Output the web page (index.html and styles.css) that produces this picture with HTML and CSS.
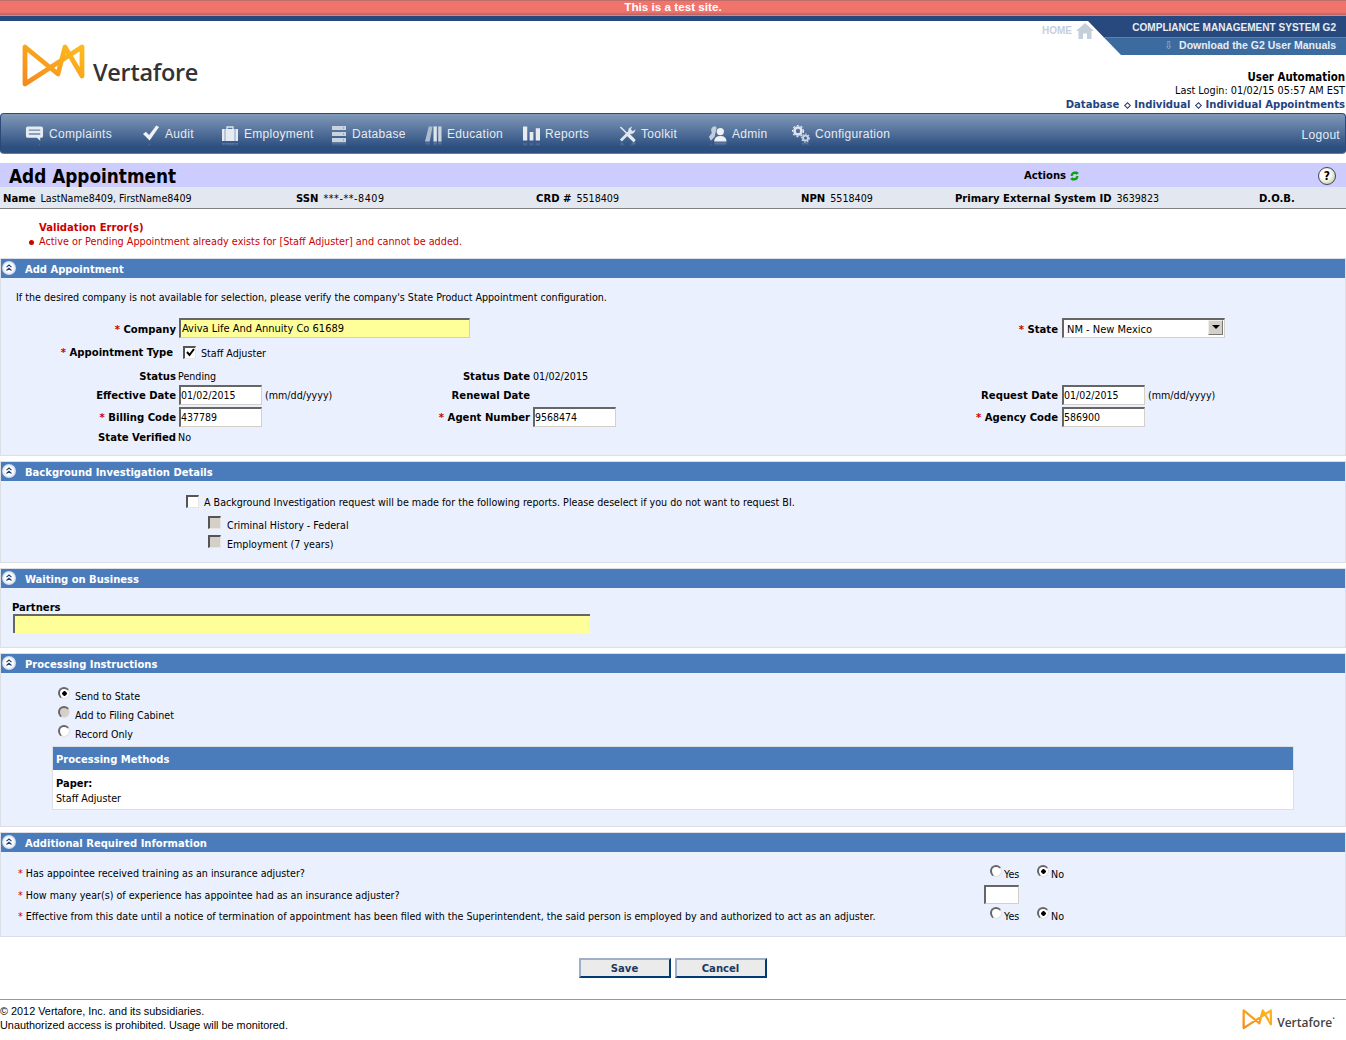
FILE: index.html
```html
<!DOCTYPE html>
<html lang="en">

<head>
    <meta charset="UTF-8">
    <title>Add Appointment</title>
    <link rel="stylesheet" href="styles.css">
</head>

<body>
    <svg class="defs" width="0" height="0">
        <defs>
            <linearGradient id="logo-grad" x1="0" y1="1" x2="1" y2="0">
                <stop offset="0" stop-color="#f58a1f" />
                <stop offset="1" stop-color="#fdbb1c" />
            </linearGradient>
            <symbol id="logo-mark" viewBox="0 0 64 44">
                <path d="M3 3 V40 L60 3 V32 L43 3 L36 30 Z" fill="none" stroke="url(#logo-grad)" stroke-width="4.800" stroke-linejoin="round" />
            </symbol>
            <symbol id="collapse" viewBox="0 0 14 14">
                <path d="M4.500 6.200 L7 4 L9.500 6.200 M4.500 9.500 L7 7.300 L9.500 9.500" fill="none" stroke="#1d3f78" stroke-width="1.100" />
            </symbol>
        </defs>
    </svg>

    <div class="test-bar">This is a test site.</div>

    <!-- logo, home corner and user block -->
    <div class="header">
        <div class="logo">
            <svg class="logo-mark" width="64" height="44"><use href="#logo-mark" /></svg>
            <span class="logo-text">Vertafore</span>
        </div>
        <div class="header-right">
            <div class="corner">
                <a class="home">HOME
                    <svg width="18" height="16" viewBox="0 0 18 16"><path d="M9 0 L18 8 H15.500 V16 H11 V10.500 H7 V16 H2.500 V8 H0 Z" fill="#c5cfdc" /></svg>
                </a>
                <div class="banner">
                    <div class="banner-top">COMPLIANCE MANAGEMENT SYSTEM G2</div>
                    <div class="banner-bottom"><span class="down">&#8681;</span>Download the G2 User Manuals</div>
                </div>
            </div>
            <div class="user">User Automation</div>
            <div class="login">Last Login: 01/02/15 05:57 AM EST</div>
            <div class="crumbs">Database <span class="dia"></span> Individual <span class="dia"></span> Individual Appointments</div>
        </div>
    </div>

    <div class="nav">
        <a class="nav-item">
            <svg class="nav-icon" width="19" height="18" viewBox="0 0 20 18"><path d="M3 1 H17 Q19 1 19 3 V11 Q19 13 17 13 H16 L16 16 L12.500 13 H3 Q1 13 1 11 V3 Q1 1 3 1 Z" fill="#e6ebf2" /><path d="M4 5 H16 M4 9 H16" stroke="#6d87ab" stroke-width="1.400" /></svg>
            Complaints
        </a>
        <a class="nav-item">
            <svg class="nav-icon" width="17" height="18" viewBox="0 0 18 18"><path d="M0 9 L3 6.500 L6.500 10 L14 0 L17 1.500 L7 16 Z" fill="#eef1f6" /></svg>
            Audit
        </a>
        <a class="nav-item">
            <svg class="nav-icon" width="18" height="18" viewBox="0 0 18 18"><path d="M6 4 V2 H12 V4" fill="none" stroke="#dfe5ee" stroke-width="1.300" /><path d="M1 4 H17 V16 H1 Z" fill="#e6ebf2" /><path d="M4 4 V16 M14 4 V16" stroke="#8ba0bc" /></svg>
            Employment
        </a>
        <a class="nav-item">
            <svg class="nav-icon" width="15" height="18" viewBox="0 0 15 18"><path d="M0 1 H14 V5 H0 Z M0 7 H14 V11 H0 Z M0 13 H14 V17 H0 Z" fill="#c9d2df" /><path d="M11 3 H12 M11 9 H12 M11 15 H12" stroke="#66809f" /></svg>
            Database
        </a>
        <a class="nav-item">
            <svg class="nav-icon" width="17" height="18" viewBox="0 0 18 18"><path d="M4 1 H8 L5 17 H0 Z" fill="#aebcd0" /><path d="M9 1 H12.500 V17 H9 Z" fill="#dfe5ee" /><path d="M14 1 H17.500 V17 H14 Z" fill="#cbd5e2" /></svg>
            Education
        </a>
        <a class="nav-item">
            <svg class="nav-icon" width="17" height="18" viewBox="0 0 18 18"><path d="M0 1 H4.500 V16 H0 Z M7 7 H11 V16 H7 Z M13.500 3 H18 V16 H13.500 Z" fill="#e6ebf2" /></svg>
            Reports
        </a>
        <a class="nav-item">
            <svg class="nav-icon" width="17" height="18" viewBox="0 0 18 18"><path d="M1.500 1.500 L9 9" stroke="#e6ebf2" stroke-width="1.600" /><path d="M9 9 L15.500 15.500" stroke="#e6ebf2" stroke-width="3.600" stroke-linecap="round" /><path d="M2 16 L11 7" stroke="#dfe5ee" stroke-width="3" /><path d="M10 8 Q8.500 2.500 14 1 L12.500 4 L14.500 6 L17.500 4 Q17 9.500 11 9 Z" fill="#dfe5ee" /></svg>
            Toolkit
        </a>
        <a class="nav-item">
            <svg class="nav-icon" width="19" height="18" viewBox="0 0 20 18"><path d="M3 16 L1 12 L4 8 Q2 2 6 1 Q9 0 9 3 L7 12 Z" fill="#c2cddc" /><circle cx="13" cy="6.500" r="3.800" fill="#eef1f6" /><path d="M6.500 17 Q6.500 11 13 11 Q19.500 11 19.500 17 Z" fill="#eef1f6" /></svg>
            Admin
        </a>
        <a class="nav-item">
            <svg class="nav-icon" width="18" height="18" viewBox="0 0 18 18"><circle cx="6" cy="6" r="3.500" fill="none" stroke="#dfe5ee" stroke-width="2.600" /><circle cx="6" cy="6" r="5.500" fill="none" stroke="#dfe5ee" stroke-width="1.300" stroke-dasharray="2 2" /><circle cx="13.500" cy="13" r="2.500" fill="none" stroke="#c9d3e0" stroke-width="2" /><circle cx="13.500" cy="13" r="4" fill="none" stroke="#c9d3e0" stroke-width="1.200" stroke-dasharray="1.500 1.500" /></svg>
            Configuration
        </a>
        <a class="nav-logout">Logout</a>
    </div>

    <div class="title-band">
        <h1>Add Appointment</h1>
        <div class="actions">Actions
            <svg width="9" height="10" viewBox="0 0 9 10"><path d="M0.500 5 Q1 0.500 5 0.500 L6.500 0.500 L6 0 L9 2 L6 4 L6.200 3 H4.500 Q3 3 2.700 5 Z M8.500 5 Q8 9.500 4 9.500 L2.500 9.500 L3 10 L0 8 L3 6 L2.800 7 H4.500 Q6 7 6.300 5 Z" fill="#0fa00f" /></svg>
        </div>
        <div class="help">?</div>
    </div>
    <div class="info-row">
        <div><b>Name</b>LastName8409, FirstName8409</div>
        <div><b>SSN</b><span class="ssn">***-**-8409</span></div>
        <div><b>CRD #</b>5518409</div>
        <div><b>NPN</b>5518409</div>
        <div><b>Primary External System ID</b>3639823</div>
        <div><b>D.O.B.</b></div>
    </div>

    <div class="errors">
        <div class="error-title">Validation Error(s)</div>
        <div class="error-item">Active or Pending Appointment already exists for [Staff Adjuster] and cannot be added.</div>
    </div>

    <div class="section">
        <div class="section-head"><svg class="toggle" width="14" height="14"><use href="#collapse" /></svg>Add Appointment</div>
        <div class="section-body body-appt">
            <p class="intro">If the desired company is not available for selection, please verify the company's State Product Appointment configuration.</p>
            <div class="form-grid">
                <label class="lbl lbl-low"><span class="req">*</span> Company</label>
                <div class="wide"><input class="field yellow company" type="text" value="Aviva Life And Annuity Co 61689"></div>
                <label class="lbl lbl-low"><span class="req">*</span> State</label>
                <div class="val val-right">
                    <div class="select">NM - New Mexico<span class="select-btn"></span></div>
                </div>

                <label class="lbl lbl-type"><span class="req">*</span> Appointment Type</label>
                <div class="wide type-val"><input class="box checked" type="checkbox" checked><span>Staff Adjuster</span></div>
                <div></div>
                <div></div>

                <label class="lbl pushed">Status</label>
                <div class="val pushed plain">Pending</div>
                <label class="lbl pushed">Status Date</label>
                <div class="val pushed">01/02/2015</div>
                <div></div>
                <div></div>

                <label class="lbl">Effective Date</label>
                <div class="val"><input class="field date" type="text" value="01/02/2015"><span class="hint">(mm/dd/yyyy)</span></div>
                <label class="lbl">Renewal Date</label>
                <div></div>
                <label class="lbl">Request Date</label>
                <div class="val val-right"><input class="field date" type="text" value="01/02/2015"><span class="hint">(mm/dd/yyyy)</span></div>

                <label class="lbl"><span class="req">*</span> Billing Code</label>
                <div class="val"><input class="field date" type="text" value="437789"></div>
                <label class="lbl"><span class="req">*</span> Agent Number</label>
                <div class="val"><input class="field date" type="text" value="9568474"></div>
                <label class="lbl"><span class="req">*</span> Agency Code</label>
                <div class="val val-right"><input class="field date" type="text" value="586900"></div>

                <label class="lbl last">State Verified</label>
                <div class="val last plain">No</div>
            </div>
        </div>
    </div>

    <div class="section">
        <div class="section-head"><svg class="toggle" width="14" height="14"><use href="#collapse" /></svg>Background Investigation Details</div>
        <div class="section-body body-bg">
            <div class="bg-row"><input class="box" type="checkbox"><span>A Background Investigation request will be made for the following reports. Please deselect if you do not want to request BI.</span></div>
            <div class="bg-sub"><input class="box" type="checkbox" disabled><span>Criminal History - Federal</span></div>
            <div class="bg-sub"><input class="box" type="checkbox" disabled><span>Employment (7 years)</span></div>
        </div>
    </div>

    <div class="section">
        <div class="section-head"><svg class="toggle" width="14" height="14"><use href="#collapse" /></svg>Waiting on Business</div>
        <div class="section-body body-wait">
            <div class="partners-label">Partners</div>
            <input class="field yellow partners" type="text">
        </div>
    </div>

    <div class="section">
        <div class="section-head"><svg class="toggle" width="14" height="14"><use href="#collapse" /></svg>Processing Instructions</div>
        <div class="section-body body-proc">
            <div class="radio-row"><input class="dot" type="radio" name="proc" checked><span>Send to State</span></div>
            <div class="radio-row"><input class="dot" type="radio" name="proc" disabled><span>Add to Filing Cabinet</span></div>
            <div class="radio-row"><input class="dot" type="radio" name="proc"><span>Record Only</span></div>
            <div class="methods">
                <div class="methods-head">Processing Methods</div>
                <div class="methods-body"><b>Paper:</b><br>Staff Adjuster</div>
            </div>
        </div>
    </div>

    <div class="section">
        <div class="section-head"><svg class="toggle" width="14" height="14"><use href="#collapse" /></svg>Additional Required Information</div>
        <div class="section-body body-extra">
            <div class="q-row">
                <div class="q q-first"><span class="req">*</span> Has appointee received training as an insurance adjuster?</div>
                <div class="a">
                    <input class="dot" type="radio" name="q1"><span class="yes">Yes</span>
                    <input class="dot" type="radio" name="q1" checked><span>No</span>
                </div>
            </div>
            <div class="q-row">
                <div class="q"><span class="req">*</span> How many year(s) of experience has appointee had as an insurance adjuster?</div>
                <div class="a-input"><input class="field years" type="text"></div>
            </div>
            <div class="q-row">
                <div class="q"><span class="req">*</span> Effective from this date until a notice of termination of appointment has been filed with the Superintendent, the said person is employed by and authorized to act as an adjuster.</div>
                <div class="a">
                    <input class="dot" type="radio" name="q3"><span class="yes">Yes</span>
                    <input class="dot" type="radio" name="q3" checked><span>No</span>
                </div>
            </div>
        </div>
    </div>

    <div class="buttons">
        <button class="btn">Save</button>
        <button class="btn">Cancel</button>
    </div>

    <div class="footer">
        <div class="copy">&copy; 2012 Vertafore, Inc. and its subsidiaries.<br>Unauthorized access is prohibited. Usage will be monitored.</div>
        <div class="foot-logo">
            <svg width="31" height="21"><use href="#logo-mark" /></svg>
            <span>Vertafore<sup>&middot;</sup></span>
        </div>
    </div>
</body>

</html>
```

FILE: styles.css
```css
html, body {
    margin: 0;
    padding: 0;
}

body {
    font-family: "DejaVu Sans", sans-serif;
    font-stretch: condensed;
    font-size: 10.63px;
    line-height: 14px;
    color: #000;
    background: #fff;
    height: 1040px;
    overflow: hidden;
}

.defs {
    position: absolute;
}

/* top strip */
.test-bar {
    height: 16px;
    border-bottom: 5px solid #27497e;
    background: linear-gradient(#8a6a6a 0, #f0736c 1px, #f0736c 12px, #b9605e 15px, #f3b0a8 16px);
    font-family: "Liberation Sans", Arial, sans-serif;
    font-stretch: normal;
    font-weight: bold;
    font-size: 11.7px;
    line-height: 14px;
    color: #fff;
    text-align: center;
}

/* header */
.header {
    height: 92px;
    display: flex;
    justify-content: space-between;
}

.logo {
    display: flex;
    align-items: flex-start;
    padding: 23px 0 0 22px;
}

.logo-text {
    font-family: "Open Sans", sans-serif;
    font-stretch: normal;
    font-size: 23.500px;
    line-height: 30px;
    font-weight: 600;
    color: #333;
    margin: 13px 0 0 7px;
    letter-spacing: -0.3px;
}

.header-right {
    text-align: right;
    padding-right: 1px;
}

.corner {
    display: flex;
    justify-content: flex-end;
    align-items: flex-start;
    margin-right: -1px;
    height: 34px;
    margin-bottom: 15px;
}

.home {
    display: flex;
    align-items: center;
    gap: 4px;
    margin: 2px -6px 0 0;
    font-family: "Liberation Sans", sans-serif;
    font-stretch: normal;
    font-weight: bold;
    font-size: 10px;
    color: #c5cfdc;
}

.banner {
    width: 258px;
    clip-path: polygon(0 0, 100% 0, 100% 100%, 33px 100%);
    font-family: "Liberation Sans", sans-serif;
    font-stretch: normal;
    font-weight: bold;
    font-size: 10.5px;
    color: #e8edf4;
    text-align: right;
}

.banner-top {
    height: 17px;
    background: #27497e;
    font-size: 10.05px;
    line-height: 13px;
    padding-right: 10px;
    border-bottom: 1px solid #5c82b0;
    box-sizing: border-box;
}

.banner-bottom {
    height: 17px;
    background: #3c6ba0;
    line-height: 15px;
    padding-right: 10px;
}

.down {
    color: #9db4d0;
    margin-right: 6px;
    font-weight: normal;
}

.user {
    font-weight: bold;
    font-size: 11.4px;
    line-height: 13px;
    padding-top: 1px;
}

.login {
    font-size: 10.8px;
    line-height: 14px;
}

.crumbs {
    font-weight: bold;
    font-size: 11.2px;
    line-height: 13px;
    color: #1f4480;
}

.dia {
    display: inline-block;
    width: 3px;
    height: 3px;
    margin: 0 1px 0 2px;
    border: 1px solid #1f3c6e;
    transform: rotate(45deg);
}

/* main menu */
.nav {
    box-sizing: border-box;
    height: 41px;
    padding-left: 24px;
    border: 1px solid #2a4a7a;
    border-bottom-color: #5c7da8;
    border-radius: 4px;
    background: linear-gradient(#8199b9, #2c4f80 85%);
    display: grid;
    grid-template-columns: 118px 78px 111px 93px 98px 96px 89px 84px 1fr auto;
    align-items: center;
    font-family: "Liberation Sans", sans-serif;
    font-stretch: normal;
    font-size: 12px;
    letter-spacing: 0.3px;
    color: #e6ebf2;
}

.nav-item {
    display: flex;
    align-items: center;
    gap: 5px;
}

.nav-icon {
    flex-shrink: 0;
    -webkit-box-reflect: below -2px linear-gradient(transparent 72%, rgba(255, 255, 255, .4));
}

.nav-logout {
    padding-right: 5px;
    padding-top: 2px;
}

/* page title */
.title-band {
    margin-top: 9px;
    height: 24px;
    background: #ccccff;
    display: grid;
    grid-template-columns: 1024px 1fr auto;
    align-items: center;
    padding-right: 10px;
}

h1 {
    margin: 0;
    padding: 2px 0 0 9px;
    font-size: 18.8px;
    line-height: 24px;
    height: 24px;
    box-sizing: border-box;
    font-weight: bold;
}

.actions {
    font-weight: bold;
    font-size: 11.2px;
    display: flex;
    align-items: center;
    gap: 4px;
    padding-top: 2px;
}

.help {
    width: 16px;
    height: 16px;
    margin-top: 2px;
    border: 1px solid #445;
    border-radius: 50%;
    background: radial-gradient(circle at 40% 40%, #fff 35%, #b3c484 95%);
    font-weight: bold;
    font-size: 12px;
    line-height: 16px;
    text-align: center;
}

.info-row {
    height: 22px;
    box-sizing: border-box;
    border-bottom: 1px solid #808080;
    background: #e3e7ef;
    padding: 3px 0 0 3px;
    display: grid;
    grid-template-columns: 293px 240px 265px 154px 304px 1fr;
    align-items: center;
}

.info-row b {
    font-size: 11.2px;
    margin-right: 5px;
}

.ssn {
    letter-spacing: 0.55px;
}

/* validation */
.errors {
    padding-top: 12px;
    padding-left: 39px;
    height: 37px;
    color: #cc0000;
}

.error-title {
    font-weight: bold;
    font-size: 11.2px;
}

.error-item {
    position: relative;
    font-size: 10.78px;
}

.error-item::before {
    content: "";
    position: absolute;
    left: -10px;
    top: 5px;
    width: 5px;
    height: 5px;
    border-radius: 50%;
    background: #cc0000;
}

/* sections */
.section {
    border: 1px solid #dcdfe6;
    margin-bottom: 5px;
}

.section-head {
    height: 19px;
    background: #4a7bbb;
    color: #fff;
    font-weight: bold;
    font-size: 11.1px;
    line-height: 21px;
    display: flex;
    align-items: flex-start;
    padding-left: 1px;
}

.toggle {
    margin: 2px 9px 0 0;
    border-radius: 50%;
    background: radial-gradient(circle, #fff 42%, #8fa9d4 100%);
}

.section-body {
    background: #eaf0fd;
}

.body-appt {
    height: 177px;
    box-sizing: border-box;
    padding-top: 12px;
}

.intro {
    margin: 0 0 12px 15px;
    line-height: 16px;
}

.form-grid {
    display: grid;
    grid-template-columns: 175px 248px 100px 424px 98px 1fr;
    grid-template-rows: 22px 24px 21px 22px 22px 16px;
    column-gap: 3px;
    align-items: start;
}

.lbl {
    font-weight: bold;
    font-size: 11.2px;
    line-height: 20px;
    padding-top: 1px;
    text-align: right;
    white-space: nowrap;
}

.lbl-low {
    padding-top: 2px;
}

.val {
    line-height: 20px;
    display: flex;
    white-space: nowrap;
}

.val-right {
    margin-left: 1px;
}

.plain {
    margin-left: -1px;
}

.wide {
    grid-column: 2 / 5;
}

.req {
    color: #cc0000;
}

.lbl-type {
    padding: 1px 3px 0 0;
    line-height: 24px;
}

.type-val {
    display: flex;
    align-items: center;
    height: 24px;
    padding-left: 4px;
}

.type-val span {
    margin: 4px 0 0 5px;
}

.lbl.pushed, .val.pushed {
    padding-top: 4px;
    line-height: 18px;
}

.lbl.last, .val.last {
    padding-top: 1px;
    line-height: 16px;
}

.hint {
    margin-left: 3px;
    padding-top: 1px;
}

.field {
    box-sizing: border-box;
    margin: 0;
    height: 20px;
    padding: 0 0 2px;
    border: 1px solid #d4d0c8;
    border-top: 2px solid #666;
    border-left: 2px solid #666;
    background: #fff;
    font: inherit;
    font-size: 10.5px;
    color: #000;
    outline: none;
}

.yellow {
    background: #ffff99;
}

.company {
    width: 291px;
    display: block;
    padding: 0 0 0 1px;
    font-size: 11px;
}

.date {
    width: 83px;
}

.select {
    box-sizing: border-box;
    width: 163px;
    height: 20px;
    border: 1px solid #d4d0c8;
    border-top: 2px solid #666;
    border-left: 2px solid #666;
    background: #fff;
    padding-left: 3px;
    font-size: 11px;
    line-height: 19px;
    display: flex;
    justify-content: space-between;
}

.select-btn {
    width: 15px;
    height: 15px;
    margin: 0 1px 1px 0;
    box-sizing: border-box;
    border: 1px solid #777;
    border-top-color: #eee;
    border-left-color: #eee;
    background: #d4d0c8;
    position: relative;
}

.select-btn::after {
    content: "";
    position: absolute;
    left: 3px;
    top: 4px;
    border: 4px solid transparent;
    border-top: 4px solid #000;
    border-bottom: 0;
}

/* check boxes and radios */
.box, .dot {
    appearance: none;
    -webkit-appearance: none;
    box-sizing: border-box;
    margin: 0;
    flex-shrink: 0;
    background: #fff;
}

.box {
    width: 13px;
    height: 13px;
    border: 1px solid #e8e6e0;
    border-top: 2px solid #555;
    border-left: 2px solid #555;
}

.box:disabled {
    background: #d4d0c8;
}

.box.checked {
    background: #fff url("data:image/svg+xml,%3Csvg xmlns='http://www.w3.org/2000/svg' width='9' height='9'%3E%3Cpath d='M1 4 L3.500 7 L8 1' fill='none' stroke='%23000' stroke-width='2'/%3E%3C/svg%3E") center no-repeat;
}

.dot {
    width: 12px;
    height: 12px;
    border-radius: 50%;
    border: 1px solid #e4e2dc;
    border-top: 2px solid #666;
    border-left: 2px solid #666;
}

.dot:checked {
    background: radial-gradient(circle, #000 2px, #fff 2.500px);
}

.dot:disabled {
    background: #d4d0c8;
}

/* background investigation */
.body-bg {
    height: 81px;
    box-sizing: border-box;
    padding: 12px 0 0 185px;
}

.bg-row, .bg-sub, .radio-row {
    height: 19px;
    line-height: 19px;
    display: flex;
    align-items: flex-start;
}

.bg-row {
    margin-bottom: 4px;
}

.bg-row .box, .radio-row .dot {
    margin-top: 2px;
}

.bg-row span {
    margin-left: 5px;
}

.bg-sub {
    padding-left: 22px;
}

.bg-sub span {
    margin-left: 6px;
}

.radio-row span {
    margin: 2px 0 0 5px;
}

/* waiting on business */
.body-wait {
    height: 59px;
    box-sizing: border-box;
    padding: 13px 0 0 11px;
}

.partners-label {
    font-weight: bold;
    font-size: 11.2px;
    line-height: 13px;
}

.partners {
    display: block;
    margin-left: 1px;
    width: 577px;
    height: 19px;
    border-right: 0;
    border-bottom: 0;
}

/* processing instructions */
.body-proc {
    height: 153px;
    box-sizing: border-box;
    padding: 12px 0 0 57px;
}

.methods {
    margin: 4px 0 0 -6px;
    width: 1242px;
    box-sizing: border-box;
    border: 1px solid #dcdfe6;
    background: #fff;
}

.methods-head {
    height: 23px;
    line-height: 25px;
    background: #4a7bbb;
    color: #fff;
    font-weight: bold;
    font-size: 11.1px;
    padding-left: 3px;
}

.methods-body {
    padding: 6px 3px 3px;
    line-height: 15px;
}

.methods-body b {
    font-size: 11px;
}

/* additional info */
.body-extra {
    height: 84px;
    box-sizing: border-box;
    padding: 11px 0 0 17px;
}

.q-row {
    height: 21px;
    display: grid;
    grid-template-columns: 966px 1fr;
    align-items: center;
}

.q {
    padding-top: 2px;
}

.q-first {
    margin-top: -1px;
}

.a {
    display: flex;
    align-items: flex-start;
    padding-left: 6px;
}

.a span {
    margin: 3px 0 0 2px;
}

.yes {
    width: 33px;
}

.years {
    display: block;
    width: 35px;
    height: 19px;
}

/* save and cancel */
.buttons {
    margin-top: 21px;
    display: flex;
    justify-content: center;
    gap: 4px;
    padding-right: 1px;
}

.btn {
    width: 92px;
    height: 20px;
    box-sizing: border-box;
    padding: 1px 0 0;
    border: 2px solid #a0aec8;
    border-right-color: #003b73;
    border-bottom-color: #003b73;
    background: #ebebeb;
    font: inherit;
    font-weight: bold;
    font-size: 11.2px;
    color: #1d3a5f;
}

/* footer */
.footer {
    margin-top: 21px;
    border-top: 1px solid #999;
    display: flex;
    justify-content: space-between;
    padding-top: 4px;
}

.copy {
    font-family: "Liberation Sans", sans-serif;
    font-stretch: normal;
    font-size: 10.87px;
    line-height: 14px;
}

.foot-logo {
    display: flex;
    align-items: flex-start;
    padding: 5px 11px 0 0;
    font-family: "Open Sans", sans-serif;
    font-stretch: normal;
    font-weight: 600;
    font-size: 12px;
    color: #444;
}

.foot-logo span {
    margin: 7px 0 0 4px;
}

.foot-logo sup {
    line-height: 0;
}
```
